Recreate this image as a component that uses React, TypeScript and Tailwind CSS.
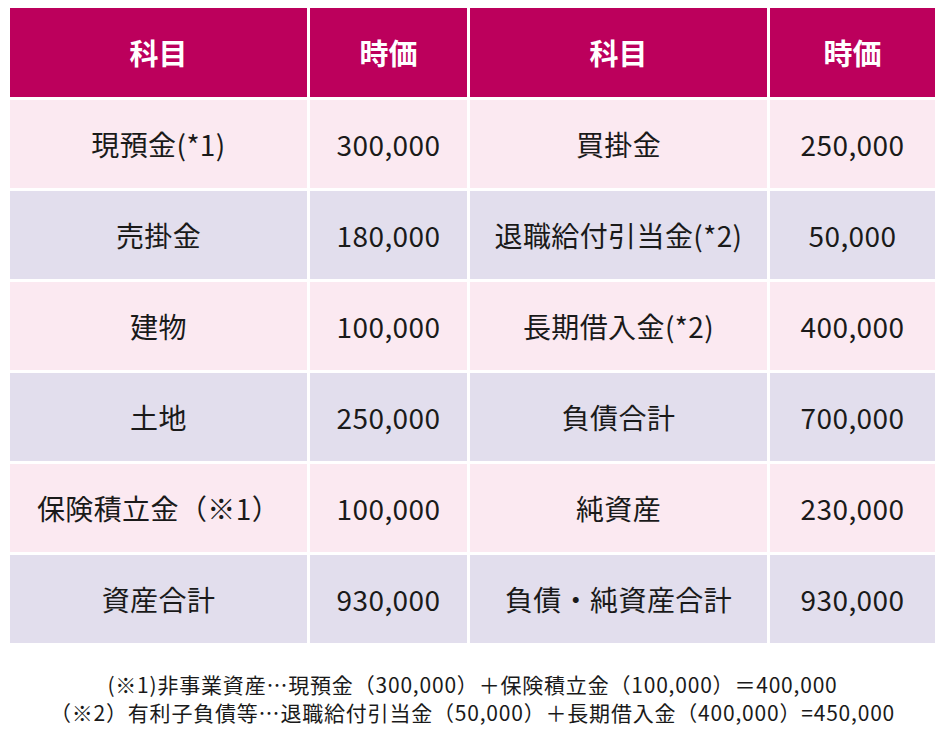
import React from 'react';

const rows: [string, string, string, string][] = [
  ['現預金(*1)', '300,000', '買掛金', '250,000'],
  ['売掛金', '180,000', '退職給付引当金(*2)', '50,000'],
  ['建物', '100,000', '長期借入金(*2)', '400,000'],
  ['土地', '250,000', '負債合計', '700,000'],
  ['保険積立金（※1）', '100,000', '純資産', '230,000'],
  ['資産合計', '930,000', '負債・純資産合計', '930,000'],
];

export default function App() {
  return (
    <div
      className="w-[946px] h-[733px] bg-white text-[#1a1a1a]"
      style={{ fontFamily: '"Noto Sans CJK JP", "Noto Sans", sans-serif' }}
    >
      <div className="pt-[8px] pl-[10px]">
        <div className="grid grid-cols-[297px_157px_297px_165px] gap-[3px] w-[925px]">
          {['科目', '時価', '科目', '時価'].map((h, i) => (
            <div
              key={i}
              className="h-[89px] bg-[#bc005c] text-white font-bold text-[29px] flex items-center justify-center"
            >
              {h}
            </div>
          ))}
          {rows.map((r, ri) =>
            r.map((c, ci) => (
              <div
                key={`${ri}-${ci}`}
                className={`h-[88px] flex items-center justify-center text-[28px] tracking-[0.4px] ${
                  ri % 2 === 0 ? 'bg-[#fbe9f1]' : 'bg-[#e2deed]'
                }`}
              >
                {c}
              </div>
            ))
          )}
        </div>
      </div>
      <div className="mt-[27px] text-center text-[21px] leading-[28px] ml-[10px] w-[925px] tracking-[0.8px]">
        <div>(※1)非事業資産…現預金（300,000）＋保険積立金（100,000）＝400,000</div>
        <div>（※2）有利子負債等…退職給付引当金（50,000）＋長期借入金（400,000）=450,000</div>
      </div>
    </div>
  );
}
